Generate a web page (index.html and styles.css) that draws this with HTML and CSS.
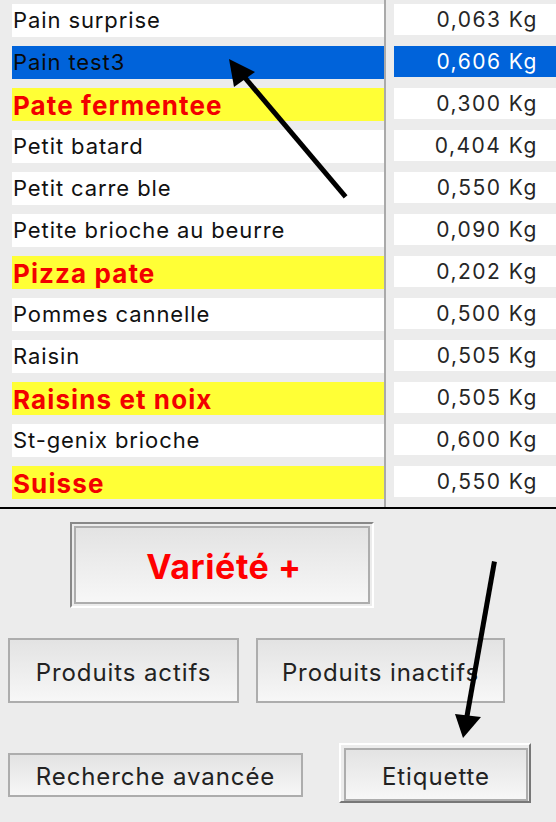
FILE: index.html
```html
<!DOCTYPE html>
<html lang="fr">
<head>
<meta charset="utf-8">
<title>Produits</title>
<link rel="stylesheet" href="styles.css">
</head>
<body>
<div class="screen">
  <div class="table">
    <div class="col-left">
      <div class="cell">Pain surprise</div>
      <div class="cell selected">Pain test3</div>
      <div class="cell highlight">Pate fermentee</div>
      <div class="cell">Petit batard</div>
      <div class="cell">Petit carre ble</div>
      <div class="cell">Petite brioche au beurre</div>
      <div class="cell highlight">Pizza pate</div>
      <div class="cell">Pommes cannelle</div>
      <div class="cell">Raisin</div>
      <div class="cell highlight">Raisins et noix</div>
      <div class="cell">St-genix brioche</div>
      <div class="cell highlight">Suisse</div>
    </div>
    <div class="divider"></div>
    <div class="col-right">
      <div class="val">0,063 Kg</div>
      <div class="val selected">0,606 Kg</div>
      <div class="val">0,300 Kg</div>
      <div class="val">0,404 Kg</div>
      <div class="val">0,550 Kg</div>
      <div class="val">0,090 Kg</div>
      <div class="val">0,202 Kg</div>
      <div class="val">0,500 Kg</div>
      <div class="val">0,505 Kg</div>
      <div class="val">0,505 Kg</div>
      <div class="val">0,600 Kg</div>
      <div class="val">0,550 Kg</div>
    </div>
  </div>
  <div class="controls">
    <div class="row-top">
      <div class="frame sunken"><div class="btn btn-big">Variété +</div></div>
    </div>
    <div class="row-mid">
      <div class="btn btn-actifs">Produits actifs</div>
      <div class="btn btn-inactifs">Produits inactifs</div>
    </div>
    <div class="row-bottom">
      <div class="btn btn-search">Recherche avancée</div>
      <div class="frame raised"><div class="btn btn-label">Etiquette</div></div>
    </div>
  </div>
  <svg class="arrows" width="556" height="822" viewBox="0 0 556 822">
    <line x1="344" y1="195" x2="241" y2="73" stroke="#000" stroke-width="5" stroke-linecap="square"/>
    <polygon points="229,59 255,72 234,87" fill="#000"/>
    <line x1="494" y1="564" x2="467" y2="716" stroke="#000" stroke-width="5" stroke-linecap="square"/>
    <polygon points="463,738 455,714 481,717" fill="#000"/>
  </svg>
</div>
</body>
</html>
```
FILE: styles.css
```css
* { box-sizing: border-box; }
html, body { margin: 0; padding: 0; }
body {
  background: #ececec;
  font-family: Inter, "Noto Sans", "Liberation Sans", sans-serif;
  color: #111;
}
.screen {
  position: relative;
  width: 556px;
  height: 822px;
  overflow: hidden;
  background: #ececec;
}
.table {
  display: flex;
  height: 509px;
  border-bottom: 2px solid #000;
}
.col-left {
  width: 384px;
  padding: 4px 0 0 12px;
}
.divider {
  width: 2px;
  background: #aaaaaa;
}
.col-right {
  flex: 1;
  padding: 4px 0 0 8px;
}
.cell {
  height: 33px;
  margin-bottom: 9px;
  background: #fff;
  padding-left: 1px;
  font-size: 22px;
  letter-spacing: 0.9px;
  line-height: 33px;
  white-space: nowrap;
  color: #111;
}
.cell.selected {
  background: #0063da;
  color: #0a0a0a;
}
.cell.highlight {
  background: #ffff36;
  color: #f20000;
  font-weight: 700;
  font-size: 26px;
  letter-spacing: 1.1px;
  line-height: 35px;
}
.val {
  height: 31px;
  margin-bottom: 11px;
  background: #fff;
  text-align: right;
  padding-right: 18px;
  font-size: 21px;
  letter-spacing: 1.5px;
  line-height: 32px;
  color: #262626;
}
.val.selected {
  background: #0063da;
  color: #fff;
}
.controls {
  display: flex;
  flex-direction: column;
}
.btn {
  display: flex;
  align-items: center;
  justify-content: center;
  border: 2px solid #adadad;
  background: linear-gradient(#e3e3e3, #f7f7f7);
  font-size: 24px;
  letter-spacing: 0.9px;
  color: #222;
  white-space: nowrap;
  padding-top: 3px;
}
.frame {
  border: 2px solid;
}
.frame.sunken {
  border-color: #888 #fff #fff #888;
  padding: 2px;
}
.frame.raised {
  border-color: #fff #777 #777 #fff;
  padding: 3px 1px 0 3px;
}
.row-top {
  padding: 13px 0 0 70px;
}
.row-top .frame {
  width: 304px;
  height: 86px;
}
.btn-big {
  height: 100%;
  font-size: 34px;
  font-weight: 700;
  letter-spacing: 0.6px;
  color: #ff0000;
  padding-left: 4px;
}
.row-mid {
  display: flex;
  gap: 17px;
  padding: 30px 0 0 8px;
}
.btn-actifs {
  width: 231px;
  height: 65px;
}
.btn-inactifs {
  width: 249px;
  height: 65px;
}
.row-bottom {
  display: flex;
  align-items: flex-start;
  gap: 36px;
  padding: 40px 0 0 8px;
}
.btn-search {
  width: 295px;
  height: 44px;
  margin-top: 10px;
}
.row-bottom .frame {
  width: 192px;
  height: 60px;
}
.btn-label {
  height: 100%;
  width: 100%;
}
.arrows {
  position: absolute;
  left: 0;
  top: 0;
  pointer-events: none;
}
```
